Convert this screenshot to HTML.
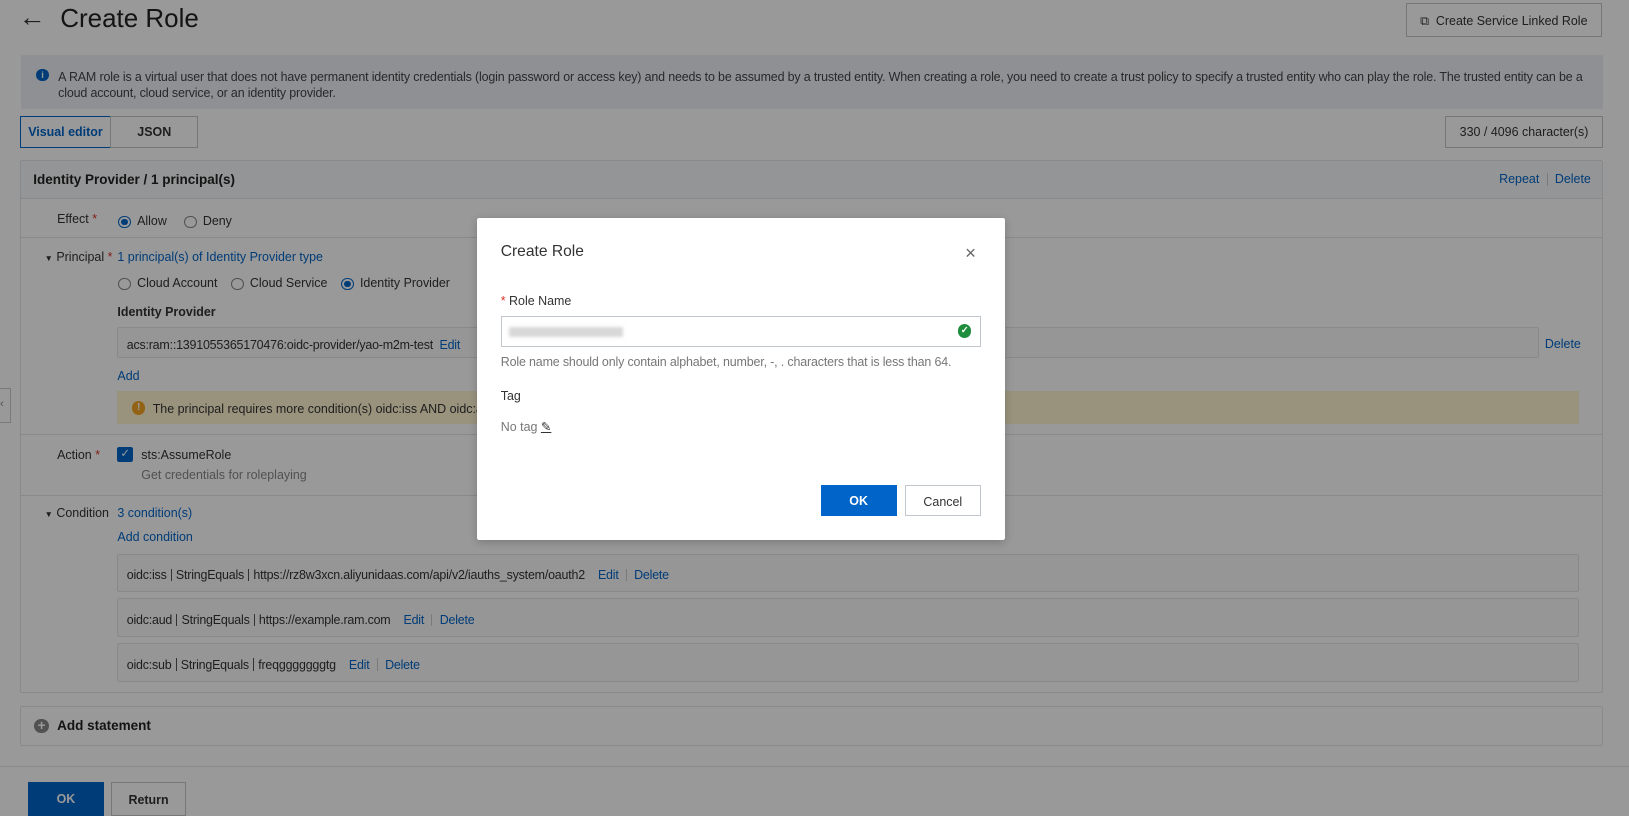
<!DOCTYPE html>
<html><head><meta charset="utf-8"><style>
html{zoom:1.0389}
body{margin:0;width:1568px;height:785px;overflow:hidden;position:relative;background:#fff;font-family:"Liberation Sans",sans-serif;font-size:12px;color:#333}
.a{position:absolute;white-space:nowrap}
.link{color:#0064c8}
.btn{position:absolute;border:1px solid #c0c6cc;background:#fff;box-sizing:border-box;text-align:center}
.radio{display:inline-block;width:12px;height:12px;border:1px solid #888;border-radius:50%;vertical-align:-3px;margin-right:6px;box-sizing:border-box;position:relative}
.radio.on{border-color:#0064c8}
.radio.on:after{content:"";position:absolute;left:2px;top:2px;width:6px;height:6px;border-radius:50%;background:#0064c8}
.box{position:absolute;border:1px solid #e3e4e6;background:#fff;box-sizing:border-box;border-radius:2px}
.sep{display:inline-block;width:1px;height:12px;background:#555;vertical-align:-2px;margin:0 4px}
.lsep{display:inline-block;width:1px;height:12px;background:#ccc;vertical-align:-2px;margin:0 7px}
.ov{position:absolute;left:0;top:0;width:1568px;height:785px;background:rgba(0,0,0,.4)}
</style></head><body>
<div class="a" style="left:18px;top:2px;font-size:26px;color:#333">&#8592;</div>
<div class="a" style="left:58px;top:3px;font-size:25px;color:#222">Create Role</div>
<div class="btn" style="left:1353px;top:3px;width:189px;height:33px;line-height:33px;font-size:12px">&#10697;&nbsp; Create Service Linked Role</div>
<div class="a" style="left:20px;top:53px;width:1523px;height:52px;background:#eef1f6;white-space:normal"></div>
<div class="a" style="left:35px;top:66px;width:12px;height:12px;border-radius:50%;background:#0064c8;color:#fff;font-size:9px;text-align:center;line-height:12px;font-weight:bold">i</div>
<div class="a" style="left:56px;top:66px;width:1470px;white-space:normal;line-height:16px;font-size:12px;letter-spacing:-0.15px;color:#444">A RAM role is a virtual user that does not have permanent identity credentials (login password or access key) and needs to be assumed by a trusted entity. When creating a role, you need to create a trust policy to specify a trusted entity who can play the role. The trusted entity can be a cloud account, cloud service, or an identity provider.</div>
<div class="btn" style="left:19px;top:112px;width:88px;height:30px;line-height:30px;border-color:#0064c8;color:#0064c8;font-weight:bold">Visual editor</div>
<div class="btn" style="left:106px;top:112px;width:85px;height:30px;line-height:30px;font-weight:bold">JSON</div>
<div class="btn" style="left:1391px;top:112px;width:152px;height:30px;line-height:30px">330 / 4096 character(s)</div>
<div class="box" style="left:19px;top:154px;width:1524px;height:513px"></div>
<div class="a" style="left:20px;top:155px;width:1522px;height:36px;background:#f7f8fa;border-bottom:1px solid #e3e4e6"></div>
<div class="a" style="left:32px;top:166px;font-size:13px;font-weight:bold;color:#222">Identity Provider / 1 principal(s)</div>
<div class="a link" style="left:1443px;top:166px">Repeat<span class="lsep"></span>Delete</div>
<div class="a" style="left:20px;top:228px;width:1522px;height:1px;background:#e3e4e6"></div>
<div class="a" style="left:55px;top:204px">Effect <span style="color:#d93026">*</span></div>
<div class="a" style="left:114px;top:206px"><span class="radio on"></span>Allow&nbsp;&nbsp;&nbsp;&nbsp;&nbsp;<span class="radio"></span>Deny</div>
<div class="a" style="left:43px;top:241px"><span style="font-size:8px">&#9660;</span> Principal <span style="color:#d93026">*</span></div>
<div class="a link" style="left:113px;top:241px">1 principal(s) of Identity Provider type</div>
<div class="a" style="left:114px;top:266px"><span class="radio"></span>Cloud Account&nbsp;&nbsp;&nbsp;&nbsp;<span class="radio"></span>Cloud Service&nbsp;&nbsp;&nbsp;&nbsp;<span class="radio on"></span>Identity Provider</div>
<div class="a" style="left:113px;top:294px;font-weight:bold;color:#333">Identity Provider</div>
<div class="box" style="left:113px;top:315px;width:1368px;height:30px;background:#fafafa"></div>
<div class="a" style="left:122px;top:325px;letter-spacing:-0.2px">acs:ram::1391055365170476:oidc-provider/yao-m2m-test&nbsp;&nbsp;<span class="link">Edit</span></div>
<div class="a link" style="left:1487px;top:324px">Delete</div>
<div class="a link" style="left:113px;top:355px">Add</div>
<div class="a" style="left:113px;top:376px;width:1407px;height:32px;background:#fff5d1"></div>
<div class="a" style="left:127px;top:386px;width:13px;height:13px;border-radius:50%;background:#f5a623;color:#fff;font-size:10px;font-weight:bold;text-align:center;line-height:13px">!</div>
<div class="a" style="left:147px;top:387px">The principal requires more condition(s) oidc:iss AND oidc:aud</div>
<div class="a" style="left:20px;top:418px;width:1522px;height:1px;background:#e3e4e6"></div>
<div class="a" style="left:55px;top:431px">Action <span style="color:#d93026">*</span></div>
<div class="a" style="left:113px;top:430px;width:15px;height:15px;background:#0064c8;border-radius:2px;color:#fff;font-size:11px;text-align:center;line-height:15px">&#10003;</div>
<div class="a" style="left:136px;top:431px">sts:AssumeRole</div>
<div class="a" style="left:136px;top:450px;color:#888">Get credentials for roleplaying</div>
<div class="a" style="left:20px;top:476px;width:1522px;height:1px;background:#e3e4e6"></div>
<div class="a" style="left:43px;top:487px"><span style="font-size:8px">&#9660;</span> Condition</div>
<div class="a link" style="left:113px;top:487px">3 condition(s)</div>
<div class="a link" style="left:113px;top:510px">Add condition</div>
<div class="box" style="left:113px;top:533px;width:1407px;height:37px;background:#fafafa"></div>
<div class="a" style="left:122px;top:547px;letter-spacing:-0.2px">oidc:iss<span class="sep"></span>StringEquals<span class="sep"></span>https://rz8w3xcn.aliyunidaas.com/api/v2/iauths_system/oauth2&nbsp;&nbsp;&nbsp;&nbsp;<span class="link">Edit<span class="lsep"></span>Delete</span></div>
<div class="box" style="left:113px;top:576px;width:1407px;height:37px;background:#fafafa"></div>
<div class="a" style="left:122px;top:590px;letter-spacing:-0.2px">oidc:aud<span class="sep"></span>StringEquals<span class="sep"></span>https://example.ram.com&nbsp;&nbsp;&nbsp;&nbsp;<span class="link">Edit<span class="lsep"></span>Delete</span></div>
<div class="box" style="left:113px;top:619px;width:1407px;height:37px;background:#fafafa"></div>
<div class="a" style="left:122px;top:633px;letter-spacing:-0.2px">oidc:sub<span class="sep"></span>StringEquals<span class="sep"></span>freqgggggggtg&nbsp;&nbsp;&nbsp;&nbsp;<span class="link">Edit<span class="lsep"></span>Delete</span></div>
<div class="box" style="left:19px;top:680px;width:1524px;height:38px"></div>
<div class="a" style="left:33px;top:692px;width:14px;height:14px;border-radius:50%;background:#888;color:#fff;text-align:center;line-height:14px;font-size:13px;font-weight:bold">+</div>
<div class="a" style="left:55px;top:691px;font-size:13px;font-weight:bold;color:#222">Add statement</div>
<div class="a" style="left:0;top:737px;width:1568px;height:1px;background:#e3e4e6"></div>
<div class="a" style="left:27px;top:753px;width:73px;height:32px;background:#0064c8;color:#fff;font-weight:bold;text-align:center;line-height:34px">OK</div>
<div class="btn" style="left:107px;top:753px;width:72px;height:32px;line-height:34px;font-weight:bold">Return</div>
<div class="a" style="left:0;top:373px;width:10px;height:32px;border:1px solid #ccc;border-left:0;background:#fff;color:#888;font-size:11px;line-height:30px">&lsaquo;</div>
<div class="ov"></div>
<div class="a" style="left:459px;top:210px;width:508px;height:310px;background:#fff;border-radius:2px;box-shadow:0 2px 8px rgba(0,0,0,.2)"></div>
<div class="a" style="left:482px;top:234px;font-size:15px;color:#333">Create Role</div>
<div class="a" style="left:929px;top:233px;font-size:18px;color:#666;font-weight:300">&#215;</div>
<div class="a" style="left:482px;top:283px"><span style="color:#d93026">*</span> Role Name</div>
<div class="a" style="left:482px;top:304px;width:462px;height:30px;border:1px solid #c0c6cc;box-sizing:border-box"></div>
<div class="a" style="left:490px;top:315px;width:110px;height:9px;background:#d8d8d8;filter:blur(1.5px)"></div>
<div class="a" style="left:922px;top:312px;width:13px;height:13px;border-radius:50%;background:#1e8e3e;color:#fff;font-size:9px;text-align:center;line-height:13px;font-weight:bold">&#10003;</div>
<div class="a" style="left:482px;top:342px;color:#777;letter-spacing:-0.15px">Role name should only contain alphabet, number, -, . characters that is less than 64.</div>
<div class="a" style="left:482px;top:374px">Tag</div>
<div class="a" style="left:482px;top:403px;color:#777">No tag <span style="color:#333;text-decoration:underline">&#9998;</span></div>
<div class="a" style="left:790px;top:467px;width:73px;height:30px;background:#0064c8;color:#fff;font-weight:bold;text-align:center;line-height:32px">OK</div>
<div class="btn" style="left:871px;top:467px;width:73px;height:30px;line-height:32px">Cancel</div>
</body></html>
